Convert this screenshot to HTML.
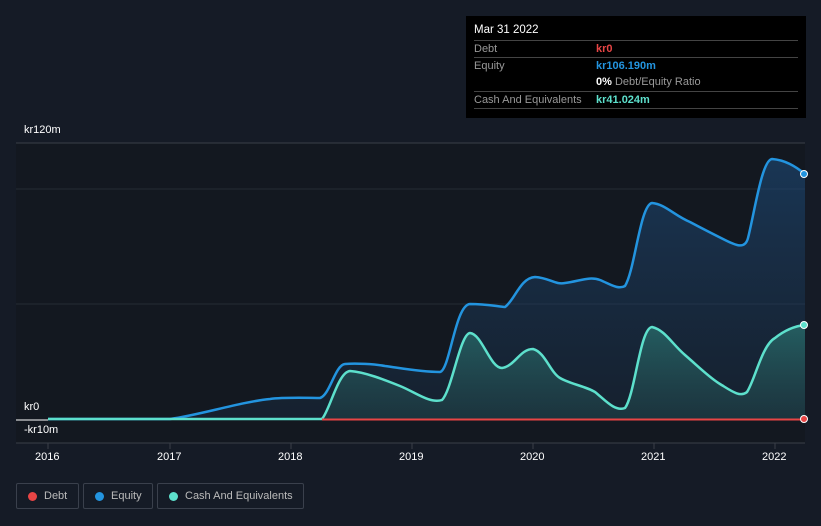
<!DOCTYPE html>
<html><head><meta charset="utf-8"><style>
html,body{margin:0;width:821px;height:526px;overflow:hidden}
body{background:#151b26;font-family:"Liberation Sans",sans-serif;position:relative}
.t{position:absolute;color:#fff;font-size:12px}
.tip{position:absolute;left:466px;top:16px;width:340px;height:102px;background:#000}
.tip .r{position:absolute;left:8px;width:324px;border-top:1px solid #444;font-size:11px;color:#999;height:16px;line-height:16px}
.lg{position:absolute;top:483px;height:26px;border:1px solid #3a404c;border-radius:2px;color:#bbb;font-size:11px;line-height:24px;box-sizing:border-box;padding-left:27px;white-space:nowrap}
.lg i{position:absolute;left:11px;top:8px;width:9px;height:9px;border-radius:50%}
</style></head><body>
<svg width="821" height="526" style="position:absolute;left:0;top:0">
<defs>
<linearGradient id="ge" x1="0" y1="0" x2="0" y2="1"><stop offset="0" stop-color="#1d4a78" stop-opacity=".6"/><stop offset="1" stop-color="#1d3a5a" stop-opacity=".25"/></linearGradient>
<linearGradient id="gc" x1="0" y1="0" x2="0" y2="1"><stop offset="0" stop-color="#2f8a80" stop-opacity=".55"/><stop offset="1" stop-color="#2a6060" stop-opacity=".3"/></linearGradient>
</defs>
<rect x="16" y="143" width="789" height="300" fill="#131820"/>
<line x1="16" y1="143" x2="805" y2="143" stroke="#3a3f48"/>
<line x1="16" y1="189" x2="805" y2="189" stroke="#262b34"/>
<line x1="16" y1="304" x2="805" y2="304" stroke="#262b34"/>
<line x1="16" y1="443" x2="805" y2="443" stroke="#3a3f48"/>
<g stroke="#3a3f48"><line x1="48" y1="443" x2="48" y2="449"/><line x1="170" y1="443" x2="170" y2="449"/><line x1="291" y1="443" x2="291" y2="449"/><line x1="412" y1="443" x2="412" y2="449"/><line x1="533" y1="443" x2="533" y2="449"/><line x1="654" y1="443" x2="654" y2="449"/><line x1="775" y1="443" x2="775" y2="449"/></g>
<path d="M48 419 L170 419 C200 415 240 402 270 399 C285 397 310 398 320 398 C330 395 335 365 345 364 C355 363 375 364 385 366 C400 368 420 372 440 372 C450 370 455 305 470 304 C485 304 495 306 505 307 C515 300 520 278 535 277 C550 278 555 285 565 283 C580 281 590 276 600 280 C610 284 618 290 625 286 C635 270 640 205 652 203 C665 204 675 216 690 222 C705 230 715 235 725 240 C735 245 745 250 748 238 C755 210 762 160 772 159 C785 160 795 166 805 174 L805 419 Z" fill="url(#ge)"/>
<path d="M48 419 L170 419 C200 415 240 402 270 399 C285 397 310 398 320 398 C330 395 335 365 345 364 C355 363 375 364 385 366 C400 368 420 372 440 372 C450 370 455 305 470 304 C485 304 495 306 505 307 C515 300 520 278 535 277 C550 278 555 285 565 283 C580 281 590 276 600 280 C610 284 618 290 625 286 C635 270 640 205 652 203 C665 204 675 216 690 222 C705 230 715 235 725 240 C735 245 745 250 748 238 C755 210 762 160 772 159 C785 160 795 166 805 174" fill="none" stroke="#2394df" stroke-width="2.5"/>
<path d="M48 419 L322 419 C330 410 338 372 350 371 C365 372 385 380 400 386 C415 392 430 404 442 400 C452 390 460 334 470 333 C482 334 490 368 502 368 C515 366 520 349 533 349 C545 352 550 372 560 378 C570 384 585 386 595 392 C605 400 615 412 625 408 C635 395 640 328 652 327 C665 330 672 344 685 355 C700 368 710 378 720 384 C730 390 740 398 747 392 C755 380 762 345 775 338 C785 330 795 326 805 325 L805 419 Z" fill="url(#gc)"/>
<path d="M48 419 L322 419 C330 410 338 372 350 371 C365 372 385 380 400 386 C415 392 430 404 442 400 C452 390 460 334 470 333 C482 334 490 368 502 368 C515 366 520 349 533 349 C545 352 550 372 560 378 C570 384 585 386 595 392 C605 400 615 412 625 408 C635 395 640 328 652 327 C665 330 672 344 685 355 C700 368 710 378 720 384 C730 390 740 398 747 392 C755 380 762 345 775 338 C785 330 795 326 805 325" fill="none" stroke="#5de0cc" stroke-width="2.5"/>
<line x1="16" y1="420" x2="48" y2="420" stroke="#fff" stroke-width="1"/>
<line x1="322" y1="419.5" x2="805" y2="419.5" stroke="#e84545" stroke-width="2"/>
<circle cx="804" cy="174" r="3.5" fill="#2394df" stroke="#fff" stroke-width="1"/>
<circle cx="804" cy="325" r="3.5" fill="#5de0cc" stroke="#fff" stroke-width="1"/>
<circle cx="804" cy="419" r="3.5" fill="#e84545" stroke="#fff" stroke-width="1"/>
</svg>
<div class="t" style="left:24px;top:124px;font-size:11px">kr120m</div>
<div class="t" style="left:24px;top:401px;font-size:11px">kr0</div>
<div class="t" style="left:24px;top:424px;font-size:11px">-kr10m</div>
<div class="t" style="left:35px;top:451px;font-size:11px">2016</div>
<div class="t" style="left:157px;top:451px;font-size:11px">2017</div>
<div class="t" style="left:278px;top:451px;font-size:11px">2018</div>
<div class="t" style="left:399px;top:451px;font-size:11px">2019</div>
<div class="t" style="left:520px;top:451px;font-size:11px">2020</div>
<div class="t" style="left:641px;top:451px;font-size:11px">2021</div>
<div class="t" style="left:762px;top:451px;font-size:11px">2022</div>
<div class="tip">
<div style="position:absolute;left:8px;top:8px;color:#fff;font-size:11.5px">Mar 31 2022</div>
<div class="r" style="top:24px">Debt<span style="position:absolute;left:122px;color:#e84545;font-weight:bold">kr0</span></div>
<div class="r" style="top:41px">Equity<span style="position:absolute;left:122px;color:#2394df;font-weight:bold">kr106.190m</span></div>
<div class="r" style="top:58px;border-top:none"><span style="position:absolute;left:122px"><b style="color:#fff">0%</b> Debt/Equity Ratio</span></div>
<div class="r" style="top:75px">Cash And Equivalents<span style="position:absolute;left:122px;color:#5de0cc;font-weight:bold">kr41.024m</span></div>
<div class="r" style="top:92px;height:0"></div>
</div>
<div class="lg" style="left:16px;width:63px"><i style="background:#e84545"></i>Debt</div>
<div class="lg" style="left:83px;width:70px"><i style="background:#2394df"></i>Equity</div>
<div class="lg" style="left:157px;width:147px"><i style="background:#5de0cc"></i>Cash And Equivalents</div>
</body></html>
